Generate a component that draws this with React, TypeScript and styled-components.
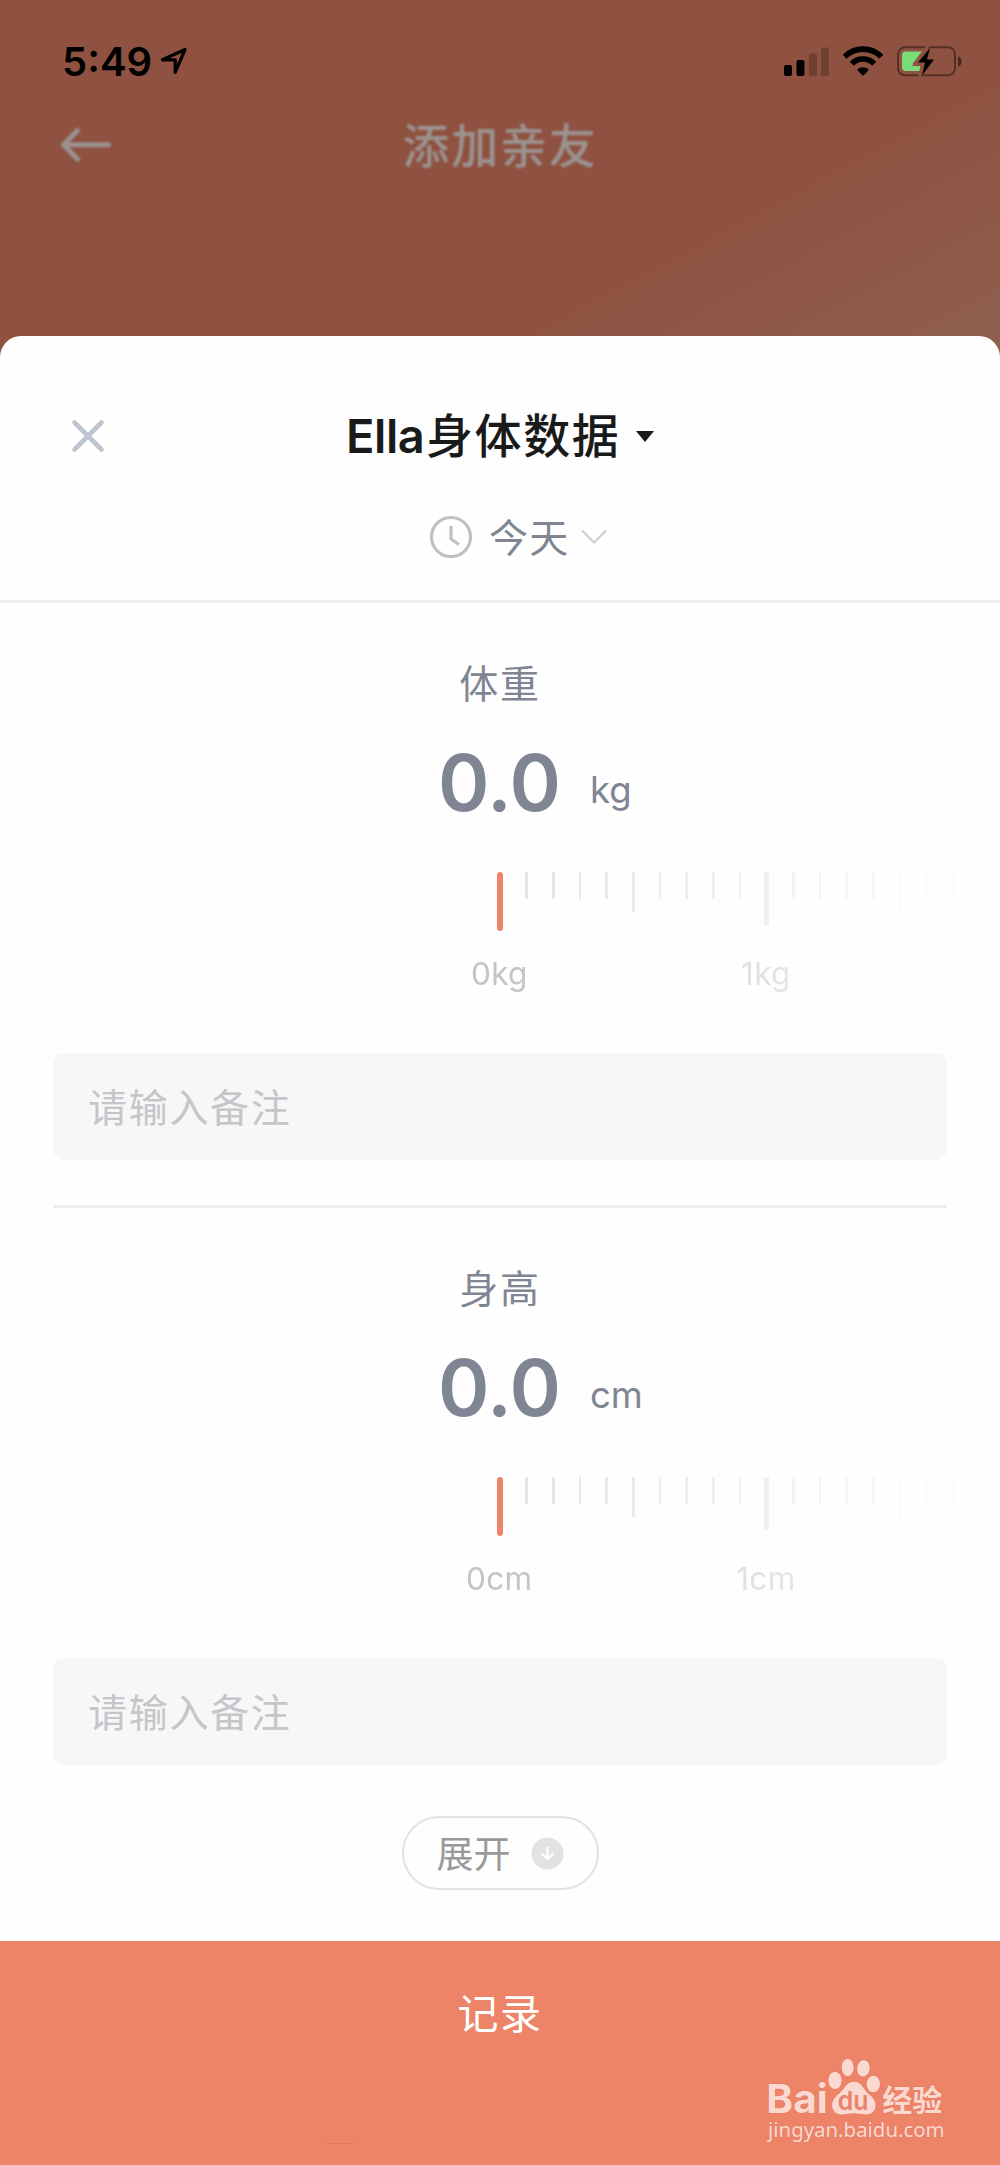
import React from 'react';
import styled, { createGlobalStyle } from 'styled-components';

const GlobalStyle = createGlobalStyle`
  * { box-sizing: border-box; }
  body { margin: 0; background: #8f5140; }
  button, input { font: inherit; }
`;

const Screen = styled.div`
  width: 1000px;
  height: 2165px;
  display: flex;
  flex-direction: column;
  overflow: hidden;
  font-family: Inter, 'Noto Sans CJK SC', sans-serif;
  background: linear-gradient(152deg, #8f5140 0, #8f5140 520px, #8f604e 785px) no-repeat 0 0 / 1000px 370px, #8f5140;
`;

const StatusBar = styled.div`
  height: 96px;
  flex: none;
  display: flex;
  align-items: flex-start;
  padding: 46px 38px 0 62px;
`;

const Clock = styled.span`
  font-size: 40px;
  line-height: 31px;
  font-weight: 600;
  color: #000;
  width: 98px;
`;

const Indicators = styled.div`
  margin-left: auto;
  display: flex;
`;

const NavBar = styled.header`
  height: 240px;
  flex: none;
  display: grid;
  grid-template-columns: 200px 600px 200px;
  align-items: start;
  color: #9b9390;
  filter: blur(1px);
`;

const BackButton = styled.button`
  display: flex;
  border: 0;
  background: none;
  padding: 30px 0 0 60px;
  color: inherit;
`;

const NavTitle = styled.h1`
  margin: 20px 0 0;
  font-size: 47px;
  line-height: 60px;
  font-weight: 500;
  letter-spacing: 1.7px;
  text-align: center;
`;

const Sheet = styled.main`
  height: 1605px;
  flex: none;
  background: #fefefe;
  border-radius: 21px 21px 0 0;
  display: flex;
  flex-direction: column;
`;

const SheetHeader = styled.div`
  height: 267px;
  flex: none;
  border-bottom: 3px solid #eeeeee;
  padding-top: 64px;
`;

const TitleRow = styled.div`
  display: grid;
  grid-template-columns: 346px 1fr;
  height: 72px;
  align-items: center;
`;

const CloseButton = styled.button`
  display: flex;
  border: 0;
  background: none;
  padding: 0 0 0 71px;
`;

const PersonPicker = styled.div`
  display: flex;
  align-items: center;
  color: #1a1a1a;
  font-size: 47px;
  line-height: 72px;
  font-weight: 600;
`;

const PersonName = styled.span`
  width: 79px;
  letter-spacing: -0.4px;
`;

const PersonData = styled.span`
  font-weight: 500;
  letter-spacing: 1.6px;
  margin: 0 16px 0 1px;
`;

const DatePicker = styled.div`
  display: flex;
  align-items: center;
  height: 60px;
  margin-top: 35px;
  padding-left: 429px;
  color: #808593;
  font-size: 39px;
  font-weight: 400;
  letter-spacing: 1.2px;
  line-height: 60px;
`;

const DateLabel = styled.span`
  margin: 2px 12px 0 16px;
`;

const Metric = styled.section`
  height: 605px;
  flex: none;
  display: flex;
  flex-direction: column;
`;

const MetricName = styled.h2`
  margin: 51px 0 0;
  height: 60px;
  line-height: 60px;
  font-size: 39px;
  font-weight: 400;
  letter-spacing: 1.8px;
  color: #808593;
  text-align: center;
`;

const Reading = styled.div`
  display: flex;
  align-items: flex-start;
  height: 100px;
  margin-top: 19px;
  padding-left: 438px;
  color: #808593;
`;

const Value = styled.span`
  width: 152px;
  font-size: 78px;
  line-height: 100px;
  font-weight: 600;
  letter-spacing: -0.3px;
`;

const Unit = styled.span`
  font-size: 36.5px;
  line-height: 50px;
  padding-top: 32px;
`;

const Ruler = styled.div`
  margin-top: 39px;
  height: 132px;
  -webkit-mask-image: linear-gradient(90deg, #000 510px, transparent 995px);
  mask-image: linear-gradient(90deg, #000 510px, transparent 995px);
`;

const Ticks = styled.div`
  display: flex;
  height: 60px;
  padding-left: 486.7px;
`;

const TickCell = styled.div`
  flex: none;
  width: 26.66px;
  display: flex;
  justify-content: center;
`;

type TickKind = 'cursor' | 'major' | 'half' | 'minor';

const tickHeight: Record<TickKind, number> = { cursor: 59, major: 53, half: 40, minor: 27 };

const Tick = styled.i<{ $kind: TickKind }>`
  width: ${({ $kind }) => ($kind === 'cursor' || $kind === 'major' ? 5.5 : 2.7)}px;
  height: ${({ $kind }) => tickHeight[$kind]}px;
  border-radius: ${({ $kind }) => ($kind === 'cursor' ? 3 : 0)}px;
  background: ${({ $kind }) => ($kind === 'cursor' ? '#ed8468' : '#e4e4e4')};
`;

const RulerLabels = styled.div`
  display: flex;
  padding: 22px 0 0 366px;
`;

const RulerLabel = styled.span`
  width: 266.6px;
  text-align: center;
  font-size: 31.5px;
  line-height: 40px;
  font-weight: 400;
  letter-spacing: 0.3px;
  color: #c4c4c4;
`;

const Note = styled.input`
  margin: 49px 53px 0;
  width: 894px;
  height: 107px;
  flex: none;
  border: 0;
  border-radius: 11px;
  background: #f7f7f7;
  padding: 1px 35px 0;
  font-size: 39px;
  font-weight: 400;
  letter-spacing: 1.7px;
  &::placeholder { color: #c5c5ca; opacity: 1; }
`;

const Divider = styled.hr`
  width: 894px;
  height: 3px;
  margin: 45px auto 0;
  border: 0;
  background: #eeeeee;
`;

const ExpandButton = styled.button`
  flex: none;
  align-self: center;
  margin-top: 3px;
  width: 197px;
  height: 74px;
  border: 2px solid #e2e2e2;
  border-radius: 37px;
  background: none;
  display: flex;
  align-items: center;
  padding: 0 0 0 33px;
  gap: 20px;
  color: #999;
  font-size: 37px;
  font-weight: 400;
  line-height: 60px;
`;

const ExpandLabel = styled.span`
  padding-top: 3px;
`;

const Footer = styled.footer`
  position: relative;
  height: 224px;
  flex: none;
  background: #ed8468;
`;

const SubmitButton = styled.button`
  display: block;
  width: 100%;
  border: 0;
  background: none;
  padding: 43px 0 0;
  color: #fff;
  font-size: 41px;
  line-height: 60px;
  letter-spacing: 1.5px;
`;

const Watermark = styled.svg`
  position: absolute;
  left: 764px;
  top: 115px;
`;

const FaintMark = styled.i`
  position: absolute;
  left: 327px;
  top: 202px;
  width: 27px;
  height: 1px;
  background: #d9765f;
`;

const ticks: TickKind[] = Array.from({ length: 18 }, (_, i) =>
  i === 0 ? 'cursor' : i % 10 === 0 ? 'major' : i % 5 === 0 ? 'half' : 'minor',
);

function StatusIcons() {
  return (
    <svg width="180" height="32" viewBox="0 0 180 32">
      <g>
        <rect x="2" y="19" width="8" height="11" rx="2" />
        <rect x="14.500" y="14" width="8" height="16" rx="2" />
        <rect x="27" y="7.500" width="8" height="22.500" rx="2" opacity=".22" />
        <rect x="39" y="1.500" width="8" height="28.500" rx="2" opacity=".22" />
      </g>
      <g fill="none" stroke="#000" strokeWidth="5.600">
        <path d="M62.700 10.700a26 26 0 0 1 36.600 0" />
        <path d="M69.800 17.700a15.800 15.800 0 0 1 22.400 0" />
      </g>
      <path d="M81 30l-6-6.200a8.600 8.600 0 0 1 12 0z" />
      <rect x="116" y="1.300" width="57" height="28" rx="7" fill="none" stroke="#000" strokeOpacity=".42" strokeWidth="2" />
      <path d="M176 10.200c5 2 5 8.600 0 10.600z" opacity=".5" />
      <path d="M124 5.500h16.500L130 20h8.500l-1 5H124a4 4 0 0 1-4-4V9.500a4 4 0 0 1 4-4z" fill="#78dc78" />
      <path d="M146.500 -1L133.500 16.500H141L137.500 31" fill="none" stroke="#8f5140" strokeWidth="3" />
      <path d="M148 2L136 16.500H143L140 29.500 152 13.500H145z" />
    </svg>
  );
}

function MetricBlock({ name, unit, children }: { name: string; unit: string; children?: React.ReactNode }) {
  return (
    <Metric>
      <MetricName>{name}</MetricName>
      <Reading>
        <Value>0.0</Value>
        <Unit>{unit}</Unit>
      </Reading>
      <Ruler>
        <Ticks>
          {ticks.map((kind, i) => (
            <TickCell key={i}>
              <Tick $kind={kind} />
            </TickCell>
          ))}
        </Ticks>
        <RulerLabels>
          <RulerLabel>0{unit}</RulerLabel>
          <RulerLabel>1{unit}</RulerLabel>
        </RulerLabels>
      </Ruler>
      <Note placeholder="请输入备注" />
      {children}
    </Metric>
  );
}

export default function App() {
  return (
    <Screen>
      <GlobalStyle />
      <StatusBar>
        <Clock>5:49</Clock>
        <svg width="28" height="28" viewBox="0 0 28 28" fill="none" stroke="#000" strokeWidth="3.200" strokeLinejoin="round">
          <path d="M25 3.500L2.500 13.800h12.700v12.500z" />
        </svg>
        <Indicators>
          <StatusIcons />
        </Indicators>
      </StatusBar>
      <NavBar>
        <BackButton aria-label="back">
          <svg width="52" height="38" viewBox="0 0 52 38" fill="none" stroke="currentColor" strokeWidth="5" strokeLinecap="round" strokeLinejoin="round">
            <path d="M48.500 18.700H4M17.500 4.500L3.500 18.700l14 14.300" />
          </svg>
        </BackButton>
        <NavTitle>添加亲友</NavTitle>
      </NavBar>
      <Sheet>
        <SheetHeader>
          <TitleRow>
            <CloseButton aria-label="close">
              <svg width="34" height="34" viewBox="0 0 34 34" stroke="#bcc4cd" strokeWidth="4.600" strokeLinecap="round">
                <path d="M3.500 3.500l27 27M30.500 3.500l-27 27" />
              </svg>
            </CloseButton>
            <PersonPicker>
              <PersonName>Ella</PersonName>
              <PersonData>身体数据</PersonData>
              <svg width="18" height="11" viewBox="0 0 18 11" fill="#1a1a1a">
                <path d="M0 0h18L9 11z" />
              </svg>
            </PersonPicker>
          </TitleRow>
          <DatePicker>
            <svg width="44" height="44" viewBox="0 0 44 44" fill="none" stroke="#c0c0c0" strokeWidth="3.200">
              <circle cx="22" cy="22" r="19.500" />
              <path d="M22 11v13l8 5.500" />
            </svg>
            <DateLabel>今天</DateLabel>
            <svg width="26" height="16" viewBox="0 0 26 16" fill="none" stroke="#cccccc" strokeWidth="2">
              <path d="M1 1.500l12 12 12-12" />
            </svg>
          </DatePicker>
        </SheetHeader>
        <MetricBlock name="体重" unit="kg">
          <Divider />
        </MetricBlock>
        <MetricBlock name="身高" unit="cm" />
        <ExpandButton>
          <ExpandLabel>展开</ExpandLabel>
          <svg width="33" height="33" viewBox="0 0 33 33">
            <circle cx="16.500" cy="16.500" r="16" fill="#e2e2e2" />
            <path d="M16.500 10v12M10.500 16.500l6 5.500 6-5.500" fill="none" stroke="#fff" strokeWidth="2.200" />
          </svg>
        </ExpandButton>
      </Sheet>
      <Footer>
        <SubmitButton>记录</SubmitButton>
        <FaintMark />
        <Watermark width="184" height="92" viewBox="72 78 552 276" fill="#fbd9d0">
          <g stroke="#d8735b" strokeOpacity=".5" strokeWidth="3" paintOrder="stroke">
            <text x="79" y="250" fontFamily="Inter" fontWeight="700" fontSize="119" textLength="184" lengthAdjust="spacingAndGlyphs">Bai</text>
            <ellipse cx="285" cy="151" rx="20" ry="26" />
            <ellipse cx="323" cy="112" rx="18" ry="26" />
            <ellipse cx="370" cy="115" rx="19" ry="25" transform="rotate(10 370 115)" />
            <ellipse cx="400" cy="162" rx="20" ry="25" />
            <path d="M342 155c-24 0-29 24-45 36-19 14-26 32-17 49 13 22 40 10 62 10s48 12 61-9c10-19 0-37-18-50-15-13-19-36-43-36z" />
            <text x="427" y="242" fontFamily="Noto Sans CJK SC" fontWeight="700" fontSize="90" textLength="180">经验</text>
            <text x="84" y="320" fontFamily="Noto Sans" fontSize="60" textLength="530" lengthAdjust="spacingAndGlyphs">jingyan.baidu.com</text>
          </g>
          <text x="293" y="240" fill="#e9826a" fontFamily="Inter" fontWeight="600" fontSize="78" textLength="92" lengthAdjust="spacingAndGlyphs">du</text>
        </Watermark>
      </Footer>
    </Screen>
  );
}
